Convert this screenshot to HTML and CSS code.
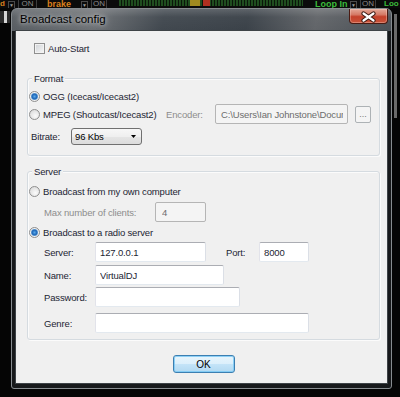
FILE: index.html
```html
<!DOCTYPE html>
<html lang="en">
<head>
    <meta charset="UTF-8">
    <meta name="viewport" content="width=device-width, initial-scale=1.0">
    <title>Broadcast config</title>
    <link rel="stylesheet" href="styles.css">
</head>
<body>
    <div id="deck">
        <span class="orange d">d</span>
        <span class="drop drop-1">&#9660;</span>
        <span class="onoff on-1">ON</span>
        <span class="orange brake">brake</span>
        <span class="drop drop-2">&#9660;</span>
        <span class="onoff on-2">ON</span>
        <span class="meter"></span>
        <span class="green loop">Loop In</span>
        <span class="drop drop-3">&#9660;</span>
        <span class="onoff on-3">ON</span>
        <span class="green loo">Loo</span>
    </div>
    <div id="stage">
        <div class="side side-left"><span class="knob"></span></div>
        <div id="win">
            <div class="titlebar">
                <span class="title">Broadcast config</span>
                <span class="close">
                    <svg width="39" height="15" viewBox="0 0 39 15">
                        <path d="M14.5 4.5 L24.5 11.5 M24.5 4.5 L14.5 11.5" stroke="#3a1a14" stroke-width="4.2" stroke-linecap="round"/>
                        <path d="M14.5 4.5 L24.5 11.5 M24.5 4.5 L14.5 11.5" stroke="#ffffff" stroke-width="2.2" stroke-linecap="round"/>
                    </svg>
                </span>
            </div>
            <div class="client">
                <label class="check-row autostart"><input type="checkbox" class="check"> Auto-Start</label>

                <div class="group format">
                    <div class="group-title">Format</div>
                    <label class="radio-row first"><input type="radio" name="fmt" class="radio" checked> OGG (Icecast/Icecast2)</label>
                    <div class="row mpeg">
                        <label class="radio-row mpeg-opt"><input type="radio" name="fmt" class="radio"> MPEG (Shoutcast/Icecast2)</label>
                        <span class="lbl off enc-lbl">Encoder:</span>
                        <input class="box off enc" value="C:\Users\Ian Johnstone\Documents\VirtualDJ" disabled>
                        <button class="more" disabled>...</button>
                    </div>
                    <div class="row bitrate">
                        <span class="lbl br-lbl">Bitrate:</span>
                        <div class="combo">
                            <span>96 Kbs</span>
                            <svg width="5" height="3" viewBox="0 0 5 3"><path d="M0 0 H5 L2.5 3 Z" fill="#000"/></svg>
                        </div>
                    </div>
                </div>

                <div class="group server">
                    <div class="group-title">Server</div>
                    <label class="radio-row first"><input type="radio" name="srv" class="radio"> Broadcast from my own computer</label>
                    <div class="row clients">
                        <span class="lbl off clients-lbl">Max number of clients:</span>
                        <input class="box off clients-box" value="4" disabled>
                    </div>
                    <label class="radio-row r2"><input type="radio" name="srv" class="radio" checked> Broadcast to a radio server</label>
                    <div class="row field srv">
                        <span class="lbl field-lbl">Server:</span>
                        <input class="box srv-box" value="127.0.0.1">
                        <span class="lbl port-lbl">Port:</span>
                        <input class="box port-box" value="8000">
                    </div>
                    <div class="row field name">
                        <span class="lbl field-lbl">Name:</span>
                        <input class="box name-box" value="VirtualDJ">
                    </div>
                    <div class="row field pass">
                        <span class="lbl field-lbl">Password:</span>
                        <input class="box pass-box" type="text" value="">
                    </div>
                    <div class="row field genre">
                        <span class="lbl field-lbl">Genre:</span>
                        <input class="box genre-box" value="">
                    </div>
                </div>

                <div class="actions">
                    <button class="ok">OK</button>
                </div>
            </div>
        </div>
        <div class="side side-right"><span class="knob"></span></div>
    </div>
</body>
</html>
```

FILE: styles.css
```css
*{
    margin: 0;
    padding: 0;
}
body{
    width: 400px;
    height: 397px;
    overflow: hidden;
    background: #050505;
    font-family: "Liberation Sans", Arial, sans-serif;
}

/* skin strip behind the dialog */
#deck{
    height: 8px;
    display: flex;
    align-items: flex-end;
    overflow: hidden;
    white-space: nowrap;
    background: #0b0b0b;
    font: bold 9px/8px "Liberation Sans", Arial, sans-serif;
}
#deck span{
    flex: none;
    box-sizing: border-box;
}
.orange{
    color: #d9801e;
}
.green{
    color: #3bbd3b;
}
.drop{
    width: 7px;
    height: 7px;
    border: 1px solid #4a4a4a;
    border-bottom: 0;
    color: #9a9a9a;
    font-size: 5px;
    line-height: 7px;
    text-align: center;
}
.onoff{
    color: #8a8a8a;
    border-left: 1px solid #3d3d3d;
    border-right: 1px solid #3d3d3d;
    font-weight: normal;
    font-size: 8px;
    text-align: center;
}
.d{
    width: 5px;
    font-size: 8px;
}
.drop-1{
    margin-left: 3px;
}
.on-1{
    margin-left: 3px;
    width: 19px;
}
.brake{
    margin-left: 10px;
    width: 26px;
}
.drop-2{
    margin-left: 8px;
}
.on-2{
    margin-left: 3px;
    width: 16px;
}
.meter{
    margin-left: 12px;
    width: 184px;
    height: 6px;
    align-self: flex-start;
    background:
        linear-gradient(to right, transparent 71px, #a08a20 71px, #a08a20 81px, transparent 81px, transparent 84px, #b03020 84px, #b03020 91px, transparent 91px),
        repeating-linear-gradient(to right, #1f4d1f 0, #1f4d1f 2px, #0a160a 2px, #0a160a 3px);
}
.loop{
    margin-left: 12px;
    width: 33px;
}
.drop-3{
    margin-left: 2px;
}
.on-3{
    margin-left: 3px;
    width: 16px;
}
.loo{
    margin-left: 8px;
    width: 15px;
    font-size: 8px;
}

#stage{
    display: flex;
}
.side{
    flex: none;
}
.side-left{
    width: 11px;
}
.side-left .knob{
    display: block;
    margin-top: 3px;
    width: 10px;
    height: 12px;
    background: linear-gradient(to right, #2c2c2c 0, #2c2c2c 4px, #d6d6d6 4px, #d6d6d6 7px, #2c2c2c 7px);
}
.side-right{
    width: 8px;
}
.side-right .knob{
    display: block;
    margin: 6px 0 0 2px;
    width: 3px;
    height: 104px;
    background: #6a6a6a;
}

/* window frame */
#win{
    flex: none;
    width: 381px;
    height: 381px;
    box-sizing: border-box;
    border: 1px solid #878c90;
    border-radius: 6px 6px 3px 3px;
    padding: 0 3px 4px 3px;
    display: flex;
    flex-direction: column;
    background:
        linear-gradient(to bottom, rgba(255,255,255,0.18) 0, rgba(255,255,255,0.03) 8px, rgba(255,255,255,0) 21px),
        linear-gradient(100deg, #585d62 0%, #6c7074 22%, #41484f 40%, #3b4249 62%, #626569 80%, #4a5056 100%);
    background-size: 100% 22px, 100% 22px;
    background-repeat: no-repeat;
    background-color: #17191b;
}
.titlebar{
    height: 21px;
    flex: none;
    display: flex;
    justify-content: space-between;
    align-items: flex-start;
}
.title{
    margin-left: 5px;
    line-height: 21px;
    font-size: 11.5px;
    color: #000;
    text-shadow: 0 0 4px rgba(255,255,255,0.7), 0 0 8px rgba(255,255,255,0.5);
}
.close{
    width: 39px;
    height: 15px;
    box-sizing: border-box;
    border: 1px solid #4a1a12;
    border-top: 0;
    border-radius: 0 0 4px 4px;
    background: linear-gradient(#e4a898 0, #d57a66 40%, #c4412b 55%, #c9533a 100%);
    box-shadow: inset 0 0 0 1px rgba(255,220,210,0.35);
    overflow: hidden;
}
.close svg{
    display: block;
    margin: 0 0 0 -1px;
}

/* dialog body */
.client{
    flex: 1;
    border: 1px solid #3e4347;
    background: #f0f0f0;
    padding: 11px 7px 0 11px;
    font-size: 9.5px;
    letter-spacing: -0.15px;
    color: #1c2533;
    white-space: nowrap;
}
.check-row,
.radio-row{
    display: flex;
    align-items: center;
    gap: 3px;
}
.autostart{
    height: 13px;
    margin-left: 7px;
}
.check{
    appearance: none;
    -webkit-appearance: none;
    margin: 0;
    width: 11px;
    height: 11px;
    box-sizing: border-box;
    border: 1px solid #8f8f8f;
    background: linear-gradient(135deg, #cfd2d6, #f8f8f8);
    box-shadow: inset 0 0 0 1px #f2f2f2;
}
.radio{
    appearance: none;
    -webkit-appearance: none;
    margin: 0;
    width: 11px;
    height: 11px;
    box-sizing: border-box;
    border: 1px solid #8f8f8f;
    border-radius: 50%;
    background: radial-gradient(circle at 60% 65%, #fbfbfb, #d4d4d4);
}
.radio:checked{
    background: radial-gradient(circle, #57a7e8 0, #1a62b4 2.6px, #8ab8e0 3.4px, #f2f2f2 4px, #d4d4d4 6px);
}

.group{
    border: 1px solid #d5dbe0;
    border-radius: 3px;
    box-shadow: inset 1px 1px 0 #fbfbfb, 1px 1px 0 #fbfbfb;
}
.format{
    margin-top: 23px;
    padding-bottom: 10px;
}
.server{
    margin-top: 15px;
    padding-bottom: 6px;
}
.group-title{
    width: max-content;
    margin: -7px 0 0 4px;
    padding: 0 2px;
    line-height: 13px;
    background: #f0f0f0;
}
.radio-row{
    height: 14px;
    padding-left: 1px;
}
.format .first{
    margin-top: 4px;
}
.server .first{
    margin-top: 6px;
}
.row{
    display: flex;
    align-items: center;
}
.lbl{
    flex: none;
}
.off{
    color: #8d8d8d;
}

.box{
    flex: none;
    box-sizing: border-box;
    height: 20px;
    border: 1px solid;
    border-color: #abadb3 #dbdfe6 #e3e9ef #e2e3ea;
    border-radius: 2px;
    background: #fff;
    padding: 0 4px;
    font: inherit;
    letter-spacing: inherit;
    color: #1c2533;
    outline: none;
}
.box.off{
    background: #f4f4f4;
    border-color: #b5b5b5;
    color: #6d6d6d;
    -webkit-text-fill-color: #6d6d6d;
}

.mpeg{
    height: 20px;
    margin-top: 1px;
}
.mpeg-opt{
    flex: none;
    width: 138px;
    box-sizing: border-box;
}
.enc-lbl{
    width: 49px;
}
.enc{
    width: 133px;
    padding-left: 5px;
}
.more{
    margin-left: 7px;
    width: 16px;
    height: 17px;
    border: 1px solid #adb2b5;
    border-radius: 2px;
    background: #f4f4f4;
    color: #7a7a7a;
    font: 9px/12px "Liberation Sans", Arial, sans-serif;
}
.bitrate{
    margin-top: 4px;
    height: 17px;
    padding-left: 3px;
}
.br-lbl{
    width: 40px;
}
.combo{
    width: 71px;
    height: 17px;
    box-sizing: border-box;
    border: 1px solid #707070;
    border-radius: 3px;
    background: linear-gradient(#f7f7f7 0, #efefef 50%, #e5e5e5 51%, #dcdcdc 100%);
    display: flex;
    align-items: center;
    justify-content: space-between;
    padding: 0 5px 0 3px;
    color: #000;
}

.clients{
    margin-top: 4px;
    height: 20px;
    padding-left: 16px;
}
.clients-lbl{
    width: 111px;
}
.clients-box{
    width: 51px;
    padding-left: 6px;
}
.r2{
    margin-top: 3px;
}
.field{
    height: 20px;
    padding-left: 16px;
}
.field-lbl{
    width: 51px;
}
.srv{
    margin-top: 3px;
}
.name{
    margin-top: 3px;
}
.pass{
    margin-top: 2px;
}
.genre{
    margin-top: 6px;
}
.srv-box{
    width: 111px;
}
.port-lbl{
    margin-left: 20px;
    width: 33px;
}
.port-box{
    width: 50px;
}
.name-box{
    width: 129px;
}
.pass-box{
    width: 145px;
}
.genre-box{
    width: 214px;
}

.actions{
    display: flex;
    justify-content: center;
    margin-top: 15px;
}
.ok{
    width: 62px;
    height: 18px;
    border: 1px solid #3c7fb1;
    border-radius: 3px;
    background: linear-gradient(#e8f5fc 0, #dbeffb 50%, #c4e4f8 51%, #b2d9f1 100%);
    box-shadow: inset 0 0 0 1px rgba(120,200,245,0.8);
    font: 10px "Liberation Sans", Arial, sans-serif;
    color: #000;
}
```
